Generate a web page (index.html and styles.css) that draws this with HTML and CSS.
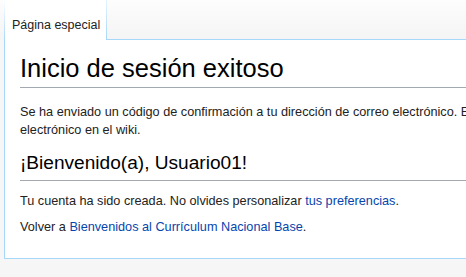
FILE: index.html
```html
<!DOCTYPE html>
<html lang="es">
<head>
    <meta charset="UTF-8">
    <meta name="viewport" content="width=device-width, initial-scale=1.0">
    <title>Inicio de sesión exitoso</title>
    <link rel="stylesheet" href="styles.css">
</head>
<body>
    <div class="header">
        <div class="tab">Página especial</div>
        <div class="tab-rest"></div>
    </div>
    <div class="content">
        <h1>Inicio de sesión exitoso</h1>
        <p class="notice">Se ha enviado un código de confirmación a tu dirección de correo electrónico. Este código no es necesario para acceder, pero necesitarás introducirlo antes de habilitar cualquier función basada en el correo<br>electrónico en el wiki.</p>
        <h2>¡Bienvenido(a), Usuario01!</h2>
        <p>Tu cuenta ha sido creada. No olvides personalizar <a href="#">tus preferencias</a>.</p>
        <p>Volver a <a href="#">Bienvenidos al Currículum Nacional Base</a>.</p>
    </div>
</body>
</html>
```

FILE: styles.css
```css
html, body {
    overflow: hidden;
}
body {
    margin: 0;
    padding: 0;
    background-color: #f6f6f6;
    color: #222;
    font-family: "Liberation Sans", Arial, sans-serif;
    font-size: 12.7px;
}
.header {
    display: flex;
    height: 40px;
    padding-left: 4px;
    background: linear-gradient(to bottom, #fdfdfd 0%, #f4f4f4 100%);
}
.tab {
    width: 87px;
    padding: 19px 8px 0 8px;
    font-size: 12.5px;
    line-height: 12px;
    white-space: nowrap;
    background:
        linear-gradient(to bottom, rgba(167, 215, 249, 0) 0%, #a7d7f9 100%) left top / 1px 100% no-repeat,
        linear-gradient(to bottom, rgba(167, 215, 249, 0.3) 0%, #a7d7f9 100%) right top / 1px 100% no-repeat,
        #fff;
}
.tab-rest {
    flex: 1;
    border-bottom: 1px solid #a7d7f9;
}
.content {
    margin-left: 4px;
    padding: 12px 0 22px 15px;
    background-color: #fff;
    border-left: 1px solid #a7d7f9;
    border-bottom: 1px solid #a7d7f9;
    overflow: hidden;
}
h1 {
    margin: 0;
    padding-bottom: 2px;
    font-size: 25.5px;
    font-weight: normal;
    line-height: 33px;
    color: #000;
    border-bottom: 1px solid #a2a9b1;
}
h2 {
    margin: 10px 0 0 0;
    padding-bottom: 5px;
    font-size: 19.1px;
    font-weight: normal;
    line-height: 25px;
    color: #000;
    border-bottom: 1px solid #a2a9b1;
}
p {
    margin: 8px 0 0 0;
    line-height: 18.3px;
}
.notice {
    margin-top: 15px;
    white-space: nowrap;
}
h2 + p {
    margin-top: 11px;
}
a {
    color: #0645ad;
    text-decoration: none;
}
```
